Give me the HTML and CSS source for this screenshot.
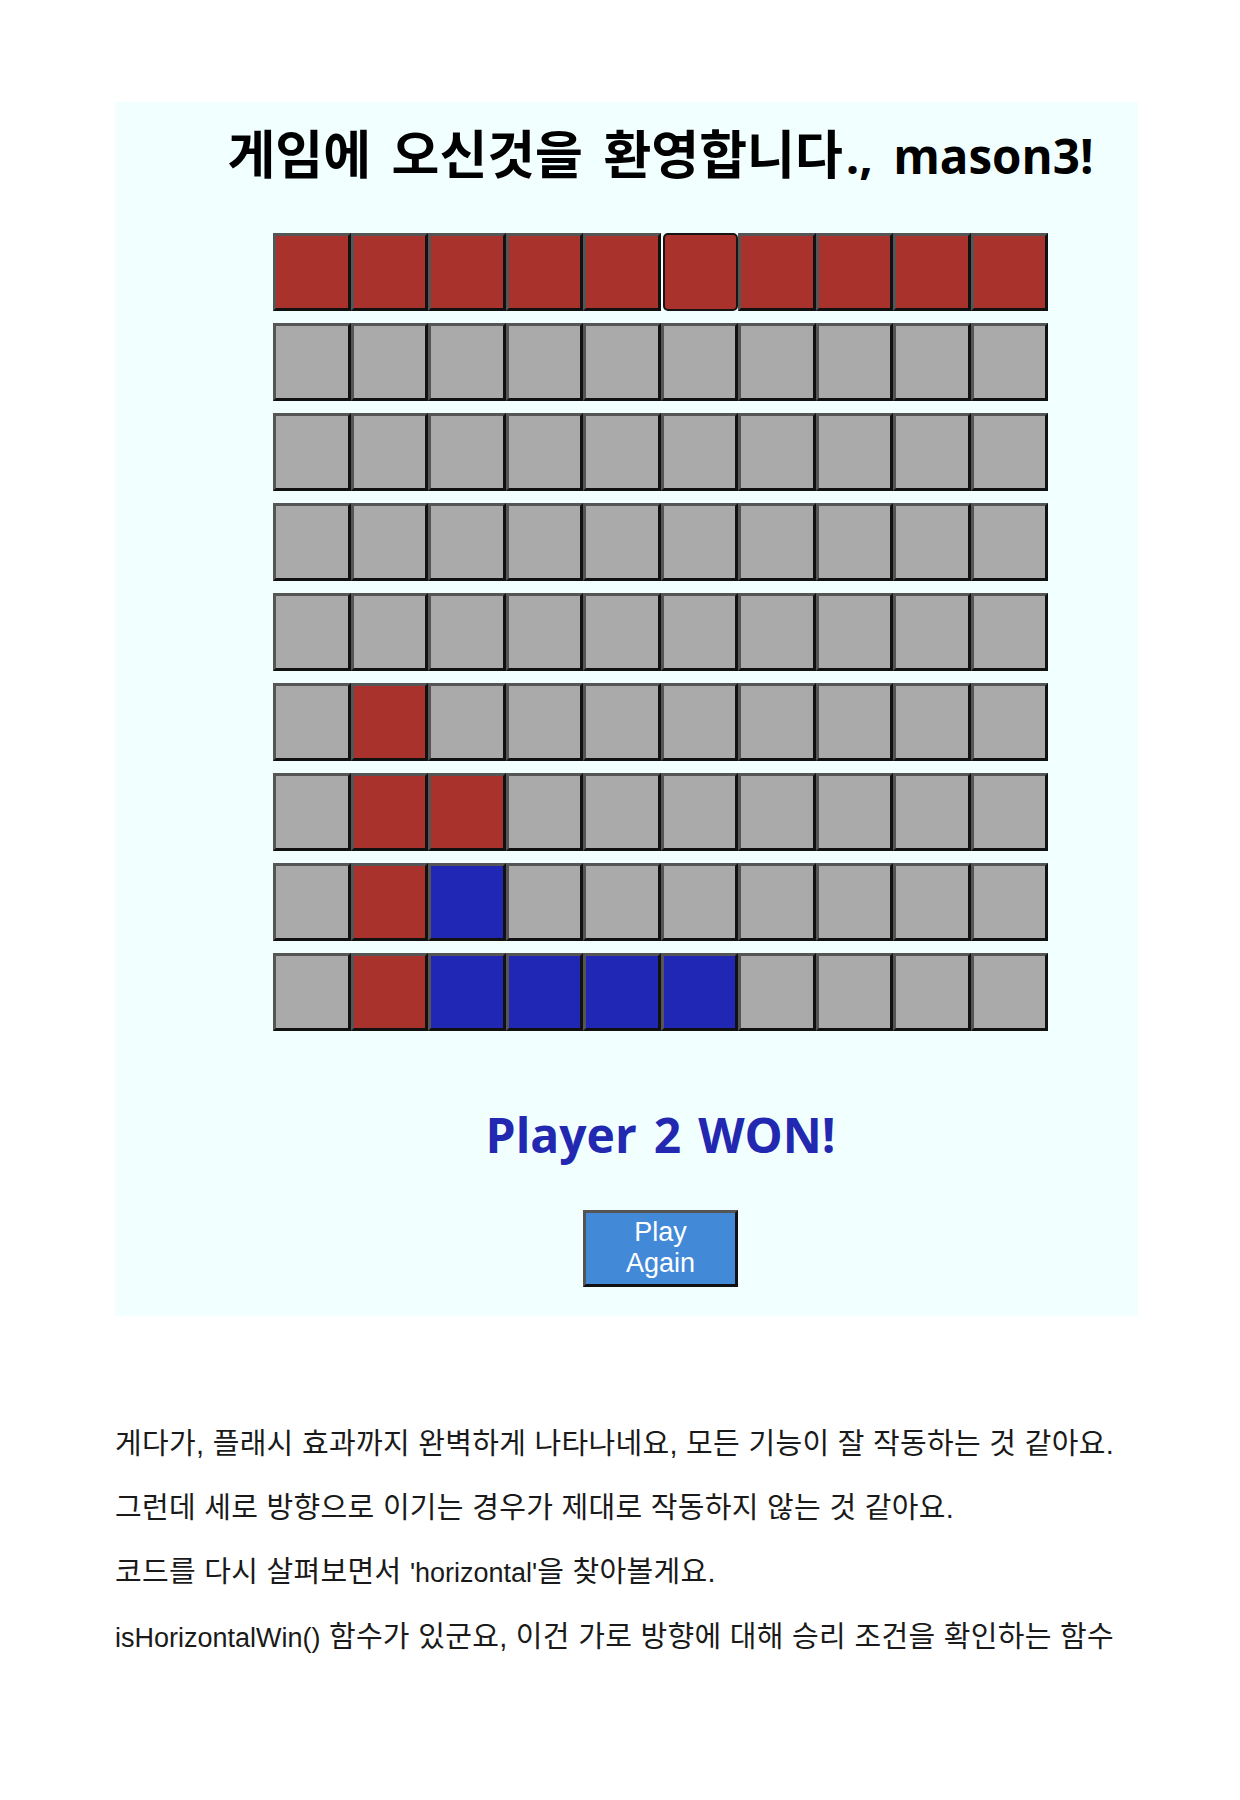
FILE: index.html
```html
<!DOCTYPE html>
<html lang="ko">
<head>
<meta charset="utf-8">
<title>Game</title>
<link rel="stylesheet" href="styles.css">
</head>
<body>
<div class="page">
  <section class="panel">
    <div class="app">
      <h1 class="title"><span class="ko">게임에 오신것을 환영합니다</span>., mason3!</h1>
      <div class="board">
        <div class="row">
          <div class="cell red"></div><div class="cell red"></div><div class="cell red"></div><div class="cell red"></div><div class="cell red"></div><div class="cell red focus"></div><div class="cell red"></div><div class="cell red"></div><div class="cell red"></div><div class="cell red"></div>
        </div>
        <div class="row">
          <div class="cell"></div><div class="cell"></div><div class="cell"></div><div class="cell"></div><div class="cell"></div><div class="cell"></div><div class="cell"></div><div class="cell"></div><div class="cell"></div><div class="cell"></div>
        </div>
        <div class="row">
          <div class="cell"></div><div class="cell"></div><div class="cell"></div><div class="cell"></div><div class="cell"></div><div class="cell"></div><div class="cell"></div><div class="cell"></div><div class="cell"></div><div class="cell"></div>
        </div>
        <div class="row">
          <div class="cell"></div><div class="cell"></div><div class="cell"></div><div class="cell"></div><div class="cell"></div><div class="cell"></div><div class="cell"></div><div class="cell"></div><div class="cell"></div><div class="cell"></div>
        </div>
        <div class="row">
          <div class="cell"></div><div class="cell"></div><div class="cell"></div><div class="cell"></div><div class="cell"></div><div class="cell"></div><div class="cell"></div><div class="cell"></div><div class="cell"></div><div class="cell"></div>
        </div>
        <div class="row">
          <div class="cell"></div><div class="cell red"></div><div class="cell"></div><div class="cell"></div><div class="cell"></div><div class="cell"></div><div class="cell"></div><div class="cell"></div><div class="cell"></div><div class="cell"></div>
        </div>
        <div class="row">
          <div class="cell"></div><div class="cell red"></div><div class="cell red"></div><div class="cell"></div><div class="cell"></div><div class="cell"></div><div class="cell"></div><div class="cell"></div><div class="cell"></div><div class="cell"></div>
        </div>
        <div class="row">
          <div class="cell"></div><div class="cell red"></div><div class="cell blue"></div><div class="cell"></div><div class="cell"></div><div class="cell"></div><div class="cell"></div><div class="cell"></div><div class="cell"></div><div class="cell"></div>
        </div>
        <div class="row">
          <div class="cell"></div><div class="cell red"></div><div class="cell blue"></div><div class="cell blue"></div><div class="cell blue"></div><div class="cell blue"></div><div class="cell"></div><div class="cell"></div><div class="cell"></div><div class="cell"></div>
        </div>
      </div>
      <h2 class="winner">Player 2 WON!</h2>
      <button class="again" type="button">Play Again</button>
    </div>
  </section>
  <div class="notes">
    <p>게다가, 플래시 효과까지 완벽하게 나타나네요, 모든 기능이 잘 작동하는 것 같아요.</p>
    <p>그런데 세로 방향으로 이기는 경우가 제대로 작동하지 않는 것 같아요.</p>
    <p>코드를 다시 살펴보면서 <span class="en">'horizontal'</span>을 찾아볼게요.</p>
    <p><span class="en">isHorizontalWin()</span> 함수가 있군요, 이건 가로 방향에 대해 승리 조건을 확인하는 함수</p>
  </div>
</div>
</body>
</html>
```

FILE: styles.css
```css
html, body {
  margin: 0;
  padding: 0;
  background: #ffffff;
}

.page {
  padding: 102px 0 0 115px;
  width: 1023px;
}

.panel {
  background: #f2ffff;
  height: 1214px;
  box-sizing: border-box;
  padding: 20px 0 0 68px;
}

.app {
  display: flex;
  flex-direction: column;
  align-items: center;
}

.title {
  margin: 0;
  font-family: "Open Sans", "Noto Sans CJK KR", sans-serif;
  font-weight: 700;
  font-size: 47.5px;
  line-height: 60px;
  word-spacing: 8px;
  color: #000;
  white-space: nowrap;
}

.title .ko {
  font-family: "Noto Sans CJK KR", sans-serif;
  font-size: 52px;
  word-spacing: 6px;
  margin-right: 3px;
}

.board {
  margin-top: 46.5px;
  display: flex;
  flex-direction: column;
  gap: 12px;
}

.row {
  display: flex;
}

.cell {
  width: 77.5px;
  height: 78px;
  box-sizing: border-box;
  border-style: solid;
  border-width: 3px;
  border-color: #555555 #111111 #111111 #555555;
  background: #aaaaaa;
}

.cell.red {
  background: #a9322c;
}

.cell.blue {
  background: #1f27b4;
}

.cell.focus {
  border: 2px solid #151515;
  border-radius: 5px;
  margin-left: 2px;
  width: 75.5px;
}

.winner {
  margin: 74px 0 0;
  font-family: "Open Sans", "Noto Sans", sans-serif;
  font-weight: 700;
  font-size: 48px;
  line-height: 60px;
  word-spacing: 4.5px;
  color: #2228b0;
}

.again {
  margin-top: 45px;
  width: 155px;
  height: 77px;
  box-sizing: border-box;
  padding: 0 20px;
  border-style: solid;
  border-width: 3px;
  border-color: #555555 #111111 #111111 #555555;
  background: #4289d8;
  color: #ffffff;
  font-family: "Liberation Sans", Arial, sans-serif;
  font-size: 27px;
  line-height: 31px;
}

.notes {
  margin-top: 96px;
  font-family: "Liberation Sans", "Noto Sans CJK KR", sans-serif;
  font-size: 29px;
  letter-spacing: 0.3px;
  color: #1a1a1a;
}

.notes p {
  margin: 0;
  line-height: 64px;
  white-space: nowrap;
}

.notes .en {
  font-size: 27px;
  letter-spacing: 0;
}
```
